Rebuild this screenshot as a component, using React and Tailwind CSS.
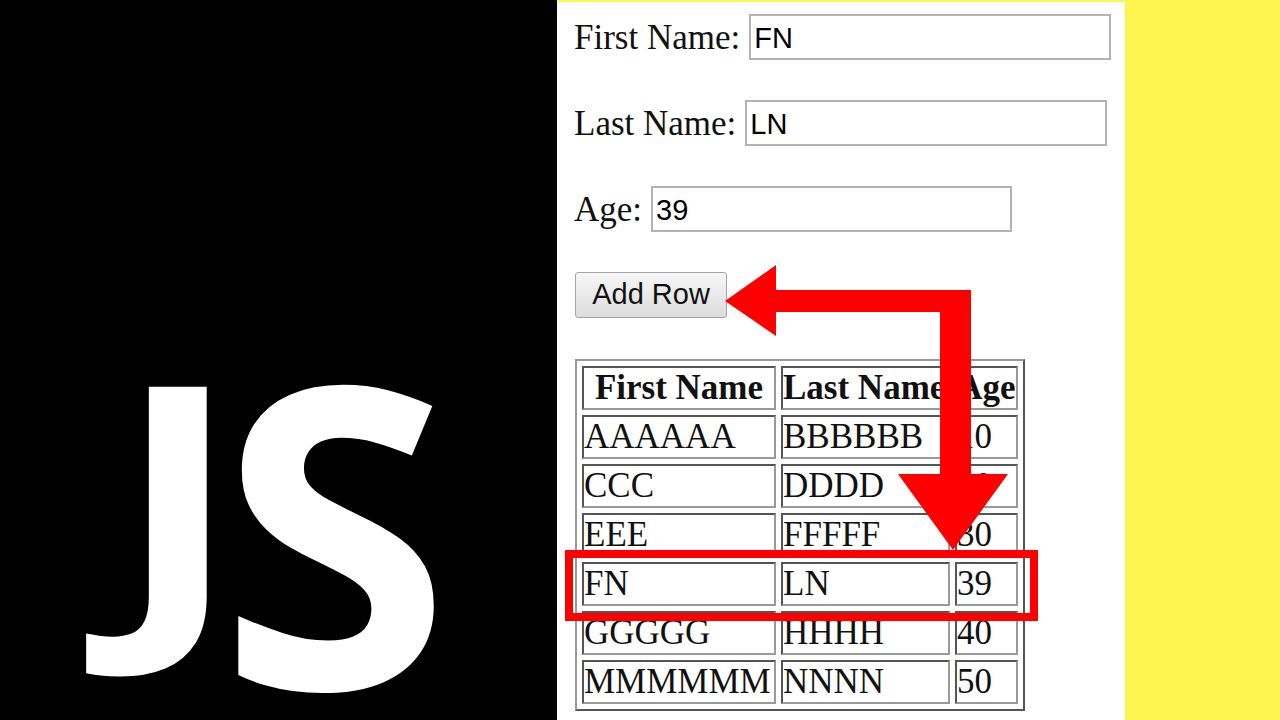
const rows = [
  ['AAAAAA', 'BBBBBB', '10'],
  ['CCC', 'DDDD', '20'],
  ['EEE', 'FFFFF', '30'],
  ['FN', 'LN', '39'],
  ['GGGGG', 'HHHH', '40'],
  ['MMMMMM', 'NNNN', '50'],
];

const cell = 'h-[44px] p-0 leading-[40px] border-2 border-t-[#555] border-l-[#555] border-r-[#9a9a9a] border-b-[#9a9a9a] whitespace-nowrap overflow-visible';

function Field({ label, value, width }) {
  return (
    <div className="flex items-center gap-[9px]">
      <span className="text-[35px] leading-none text-[#111]">{label}</span>
      <input
        readOnly
        value={value}
        className={`${width} h-[46px] border-2 border-[#b3b3b3] bg-white px-[3px] pt-[3px] font-['Liberation_Sans',Arial,sans-serif] text-[29px] text-black outline-none`}
      />
    </div>
  );
}

export default function App() {
  return (
    <div className="relative w-[1280px] h-[720px] overflow-hidden flex bg-[#fff54f]">
      <div className="w-[557px] h-full bg-black pt-[316px] pl-[88px]">
        <div className="font-['Open_Sans',sans-serif] font-bold text-white text-[420px] leading-[420px] whitespace-nowrap">
          <span className="inline-block ml-[14px] mr-[-22px] origin-top-right translate-y-[16px] scale-x-[0.91] scale-y-[0.747]">J</span>
          <span className="inline-block">S</span>
        </div>
      </div>

      <div className="w-[568px] h-full mt-[2px] bg-white pl-[17px] pt-[12px] flex flex-col gap-[40px] font-['Liberation_Serif','Times_New_Roman',serif]">
        <Field label="First Name:" value="FN" width="w-[362px]" />
        <Field label="Last Name:" value="LN" width="w-[362px]" />
        <Field label="Age:" value="39" width="w-[361px]" />

        <div>
          <button className="w-[152px] h-[46px] ml-[1px] rounded-[3px] border border-[#a6a6a6] bg-gradient-to-b from-[#f7f7f7] to-[#dcdcdc] font-['Liberation_Sans',Arial,sans-serif] text-[29px] text-[#111]">
            Add Row
          </button>
        </div>

        <table className="ml-[1px] mt-[1px] w-[450px] border-separate border-spacing-x-[5px] border-spacing-y-[5.7px] border-2 border-t-[#9a9a9a] border-l-[#9a9a9a] border-r-[#555] border-b-[#555] text-[35px] text-[#111]">
          <thead>
            <tr>
              <th className={`${cell} w-[194px] text-center font-bold`}>First Name</th>
              <th className={`${cell} w-[169px] text-left font-bold`}>Last Name</th>
              <th className={`${cell} w-[63px] text-center font-bold`}>Age</th>
            </tr>
          </thead>
          <tbody>
            {rows.map((r) => (
              <tr key={r[0]}>
                <td className={`${cell} text-left`}>{r[0]}</td>
                <td className={`${cell} text-left`}>{r[1]}</td>
                <td className={`${cell} text-left`}>{r[2]}</td>
              </tr>
            ))}
          </tbody>
        </table>
      </div>

      <svg className="absolute inset-0 pointer-events-none" width="1280" height="720" viewBox="0 0 1280 720">
        <polygon
          fill="#ff0000"
          points="725,301 776,265 776,290 971,290 971,474 1008,474 953,550 898,474 940,474 940,312 776,312 776,336"
        />
        <rect x="569" y="554" width="465" height="63" fill="none" stroke="#ff0000" strokeWidth="8" />
      </svg>
    </div>
  );
}
